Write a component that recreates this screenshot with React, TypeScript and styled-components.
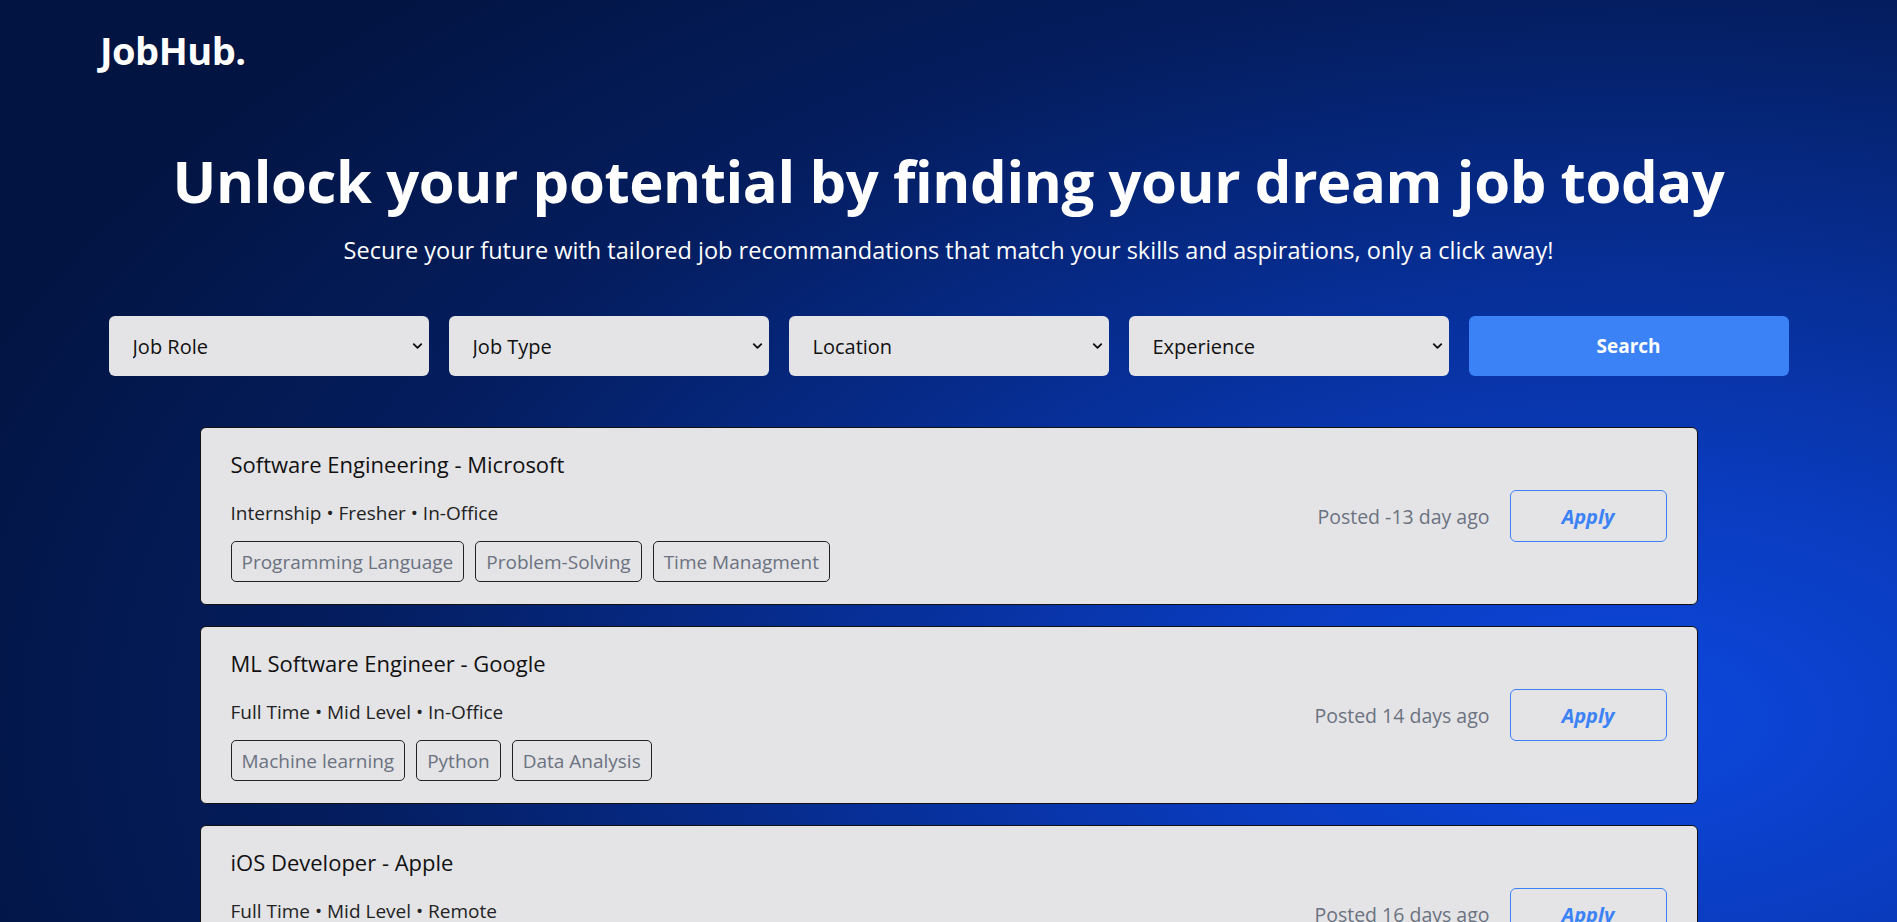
import React from 'react';
import styled, { createGlobalStyle } from 'styled-components';
import { ChevronDown } from 'lucide-react';

const GlobalStyle = createGlobalStyle`
  * {
    box-sizing: border-box;
  }

  html,
  body {
    margin: 0;
    padding: 0;
  }

  body {
    font-family: 'Open Sans', 'Noto Sans', Arial, sans-serif;
    min-height: 100vh;
    background-color: #021441;
    background-image: radial-gradient(
      ellipse 95% 110% at 86% 78%,
      #0c47dc 0%,
      #0a3cc0 22%,
      #062c8e 48%,
      #041d5e 72%,
      #021441 100%
    );
    background-attachment: fixed;
  }
`;

const Page = styled.div`
  min-height: 100vh;
  padding-bottom: 40px;
`;

const Header = styled.header`
  padding: 25px 100px 0;
`;

const Logo = styled.div`
  color: #ffffff;
  font-size: 38px;
  font-weight: 700;
  line-height: 50px;
  letter-spacing: -0.5px;
`;

const Hero = styled.section`
  display: flex;
  flex-direction: column;
  align-items: center;
  padding-top: 68px;
`;

const Heading = styled.h1`
  margin: 0;
  color: #ffffff;
  font-size: 58px;
  font-weight: 700;
  line-height: 76px;
  letter-spacing: -0.4px;
`;

const Subtitle = styled.p`
  margin: 15px 0 0;
  color: #ffffff;
  font-size: 23.5px;
  line-height: 32px;
`;

const Filters = styled.div`
  display: grid;
  grid-template-columns: repeat(5, 320px);
  gap: 20px;
  justify-content: center;
  margin-top: 50px;
`;

const SelectWrap = styled.div`
  position: relative;
  height: 60px;
`;

const Select = styled.select`
  appearance: none;
  width: 100%;
  height: 100%;
  border: none;
  border-radius: 6px;
  background: #e4e4e7;
  color: #111111;
  padding: 0 40px 0 24px;
  font-family: 'Open Sans', 'Noto Sans', Arial, sans-serif;
  font-size: 20px;
  font-weight: 500;
  outline: none;
  cursor: pointer;
`;

const Chevron = styled(ChevronDown)`
  position: absolute;
  right: 4px;
  top: 50%;
  transform: translateY(-50%);
  pointer-events: none;
  color: #111111;
`;

const SearchButton = styled.button`
  height: 60px;
  border: none;
  border-radius: 6px;
  background: #3b82f6;
  color: #ffffff;
  font-family: 'Open Sans', 'Noto Sans', Arial, sans-serif;
  font-size: 19px;
  font-weight: 700;
  cursor: pointer;
`;

const JobList = styled.div`
  display: flex;
  flex-direction: column;
  gap: 21px;
  width: 1498px;
  margin: 51px auto 0;
`;

const Card = styled.article`
  display: flex;
  align-items: center;
  justify-content: space-between;
  background: #e4e4e7;
  border: 1px solid #111111;
  border-radius: 6px;
  padding: 22px 30px 22px 30px;
`;

const CardInfo = styled.div`
  display: flex;
  flex-direction: column;
`;

const JobTitle = styled.h2`
  margin: 0 0 22px;
  color: #111111;
  font-size: 22px;
  font-weight: 500;
  line-height: 28px;
`;

const Meta = styled.div`
  color: #222222;
  font-size: 19px;
  line-height: 27px;
  margin-bottom: 14px;
`;

const Tags = styled.div`
  display: flex;
  gap: 11px;
`;

const Tag = styled.span`
  display: inline-flex;
  align-items: center;
  height: 41px;
  padding: 0 10px;
  border: 1px solid #222222;
  border-radius: 5px;
  color: #6b7280;
  font-size: 19px;
`;

const CardActions = styled.div`
  display: flex;
  align-items: center;
  gap: 20px;
`;

const Posted = styled.span`
  color: #6b7280;
  font-size: 19.5px;
`;

const ApplyButton = styled.button`
  width: 157px;
  height: 52px;
  border: 1px solid #3b82f6;
  border-radius: 6px;
  background: transparent;
  color: #3b82f6;
  font-family: 'Open Sans', 'Noto Sans', Arial, sans-serif;
  font-size: 20px;
  font-weight: 700;
  font-style: italic;
  cursor: pointer;
`;

type Job = {
  title: string;
  meta: string[];
  tags: string[];
  posted: string;
};

const jobs: Job[] = [
  {
    title: 'Software Engineering - Microsoft',
    meta: ['Internship', 'Fresher', 'In-Office'],
    tags: ['Programming Language', 'Problem-Solving', 'Time Managment'],
    posted: 'Posted -13 day ago',
  },
  {
    title: 'ML Software Engineer - Google',
    meta: ['Full Time', 'Mid Level', 'In-Office'],
    tags: ['Machine learning', 'Python', 'Data Analysis'],
    posted: 'Posted 14 days ago',
  },
  {
    title: 'iOS Developer - Apple',
    meta: ['Full Time', 'Mid Level', 'Remote'],
    tags: ['Swift', 'UIKit', 'Xcode'],
    posted: 'Posted 16 days ago',
  },
];

const filters = ['Job Role', 'Job Type', 'Location', 'Experience'];

const App: React.FC = () => {
  return (
    <>
      <GlobalStyle />
      <Page>
        <Header>
          <Logo>JobHub.</Logo>
        </Header>

        <Hero>
          <Heading>Unlock your potential by finding your dream job today</Heading>
          <Subtitle>
            Secure your future with tailored job recommandations that match your skills and aspirations, only a click away!
          </Subtitle>
        </Hero>

        <Filters>
          {filters.map((label) => (
            <SelectWrap key={label}>
              <Select defaultValue="">
                <option value="" disabled hidden>
                  {label}
                </option>
              </Select>
              <Chevron size={15} strokeWidth={3} />
            </SelectWrap>
          ))}
          <SearchButton>Search</SearchButton>
        </Filters>

        <JobList>
          {jobs.map((job) => (
            <Card key={job.title}>
              <CardInfo>
                <JobTitle>{job.title}</JobTitle>
                <Meta>{job.meta.join(' • ')}</Meta>
                <Tags>
                  {job.tags.map((tag) => (
                    <Tag key={tag}>{tag}</Tag>
                  ))}
                </Tags>
              </CardInfo>
              <CardActions>
                <Posted>{job.posted}</Posted>
                <ApplyButton>Apply</ApplyButton>
              </CardActions>
            </Card>
          ))}
        </JobList>
      </Page>
    </>
  );
};

export default App;
